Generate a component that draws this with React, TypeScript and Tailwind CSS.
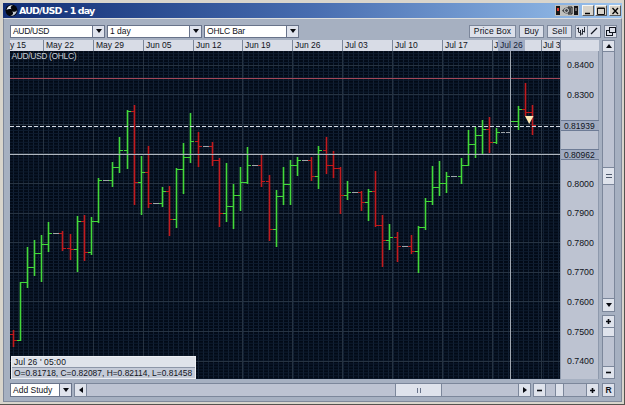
import React from "react";

type Bar = [x: number, high: number, low: number, close: number, dir: "g" | "r"];

const bars: Bar[] = [
  [13, 330, 346, 340, "r"], [20, 282, 340, 282, "g"], [27, 247, 287, 267, "g"], [34, 240, 275, 253, "g"],
  [41, 235, 281, 244, "g"], [48, 222, 251, 233, "g"], [62, 231, 250, 248, "r"], [70, 234, 259, 249, "r"],
  [77, 216, 271, 221, "g"], [84, 215, 260, 252, "r"], [91, 217, 254, 221, "g"], [98, 178, 222, 180, "g"],
  [112, 162, 186, 167, "g"], [119, 137, 172, 150, "g"], [127, 110, 168, 111, "g"], [134, 105, 204, 182, "r"],
  [141, 156, 214, 172, "g"], [148, 146, 207, 203, "r"], [162, 187, 206, 191, "g"], [169, 186, 235, 219, "r"],
  [176, 168, 227, 169, "g"], [183, 143, 193, 157, "g"], [190, 113, 162, 141, "g"], [198, 132, 166, 146, "r"],
  [212, 142, 165, 160, "r"], [219, 158, 226, 213, "r"], [226, 163, 221, 206, "g"], [233, 184, 228, 195, "g"],
  [240, 167, 210, 182, "g"], [247, 147, 183, 165, "g"], [261, 155, 186, 181, "r"], [269, 175, 240, 229, "r"],
  [276, 190, 246, 196, "g"], [283, 167, 204, 184, "g"], [290, 160, 204, 165, "g"], [297, 157, 175, 160, "g"],
  [311, 157, 180, 176, "r"], [318, 146, 188, 150, "g"], [326, 137, 173, 165, "r"], [333, 151, 177, 168, "r"],
  [340, 167, 213, 195, "r"], [347, 181, 199, 192, "g"], [361, 191, 210, 202, "r"], [368, 189, 220, 191, "g"],
  [375, 171, 226, 225, "r"], [382, 215, 266, 240, "r"], [389, 224, 249, 237, "g"], [397, 232, 261, 246, "r"],
  [411, 235, 253, 251, "r"], [418, 226, 272, 227, "g"], [425, 198, 229, 201, "g"], [432, 166, 204, 187, "g"],
  [439, 161, 195, 183, "g"], [446, 172, 192, 176, "g"], [461, 158, 183, 165, "g"], [468, 130, 165, 144, "g"],
  [475, 127, 157, 135, "g"], [482, 120, 154, 129, "g"], [489, 117, 152, 142, "r"], [496, 128, 143, 132, "g"],
  [518, 106, 129, 109, "g"], [525, 83, 115, 112, "r"], [532, 105, 134, 125, "r"],
];

const color = { g: "#43d83a", r: "#c21a1d" };
const weekColumns = [43, 93, 143, 193, 242, 292, 342, 392, 442, 492, 541];
const priceRows = [65, 94, 124, 153, 183, 213, 242, 272, 301, 331, 361];

function Chart() {
  return (
    <svg width="550" height="328" viewBox="10 51 550 328" className="block" shapeRendering="crispEdges">
      <defs>
        <pattern id="fine" x="43" y="65" width="5" height="2.955" patternUnits="userSpaceOnUse" shapeRendering="auto">
          <path d="M.5 0V3" stroke="#142235" strokeWidth="1" />
          <path d="M0 .5H5" stroke="#0d1b2e" strokeWidth="1" />
        </pattern>
      </defs>
      <rect x="10" y="51" width="550" height="328" fill="#020a17" />
      <rect x="10" y="51" width="550" height="328" fill="url(#fine)" />
      {weekColumns.map((x) => <path key={x} d={`M${x + 0.5} 51V379`} stroke="#263342" />)}
      {priceRows.map((y) => <path key={y} d={`M10 ${y + 0.5}H560`} stroke="#263342" />)}
      <path d="M10 78.5H560" stroke="#a34858" />
      <path d="M10 334.5H13" stroke={color.r} />
      {bars.map(([x, h, l, c, d], i) => {
        const next = bars[i + 1];
        const gap = next ? next[0] - x : 0;
        return (
          <g key={x}>
            <path d={`M${x + 0.5} ${h}V${l + 1}`} stroke={color[d]} strokeWidth="1.6" shapeRendering="auto" />
            <path d={`M${x} ${c + 0.5}h4`} stroke={color[d]} />
            {next && gap < 20 && <path d={`M${next[0] - 3} ${c + 0.5}h3`} stroke={color[next[4]]} />}
            {gap > 10 && gap < 20 && <path d={`M${x + 5} ${c + 0.5}h6`} stroke="#9fa5aa" />}
          </g>
        );
      })}
      <path d="M501 132.5h4M506 132.5h5" stroke="#9fa5aa" />
      <path d="M511 121.5h7" stroke={color.g} />
      <path d="M10 126.5H560" stroke="#d5dae2" strokeDasharray="4 2" />
      <path d="M10 154.5H560" stroke="#afb6bf" />
      <path d="M510.5 51V379" stroke="#a1a8b1" />
      <path d="M525 116H533.5L529.2 124Z" fill="#ffe9b5" shapeRendering="auto" />
      <text x="11.5" y="59" fontSize="8.5" textLength="65" fill="#cbd0d8">AUD/USD (OHLC)</text>
    </svg>
  );
}

function Arrow({ dir }: { dir: "up" | "down" | "left" | "right" }) {
  const d = { up: "M1 6 4 2 7 6Z", down: "M1 2H7L4 6Z", left: "M6 1V7L2 4Z", right: "M2 1V7L6 4Z" }[dir];
  return <svg width="8" height="8" viewBox="0 0 8 8"><path d={d} fill="#080a10" /></svg>;
}

function Sign({ plus }: { plus?: boolean }) {
  return (
    <svg width="7" height="7" viewBox="0 0 7 7">
      <path d={plus ? "M1 2.7H6V4.3H1ZM2.7 1H4.3V6H2.7Z" : "M1 2.7H6V4.3H1Z"} fill="#080a10" />
    </svg>
  );
}

function Select({ label, className }: { label: string; className: string }) {
  return (
    <div className={`flex h-[13px] border border-[#68738a] bg-white ${className}`}>
      <span className="flex-1 pl-[2px] leading-[11px]">{label}</span>
      <span className="flex w-[12px] items-center justify-center border-l border-[#68738a] bg-[#dfe3ed]"><Arrow dir="down" /></span>
    </div>
  );
}

const btn = "flex shrink-0 items-center justify-center border border-[#7c879b] bg-[#dce0ea]";

const windowButtons = [
  { kind: "min", gap: "ml-[3px]" },
  { kind: "max", gap: "ml-px" },
  { kind: "close", gap: "ml-[2px]" },
];

function TitleBar() {
  return (
    <header className="flex h-[15px] shrink-0 items-center bg-linear-to-r from-[#122e75] via-[#486db0] via-50% to-[#9cc4ee] pl-[2px] pr-px">
      <svg width="13" height="13" viewBox="0 0 13 13">
        <circle cx="6.5" cy="6.5" r="6" fill="#05070c" />
        <path d="M1.5 6C2 2.5 5 .8 8 1.2 5.5 2 5 4 6.6 5.3 4.7 4.7 3 4.6 1.5 6Z" fill="#e4e8ee" />
        <path d="M11.8 6.3C11.7 10 8.5 12.3 5 11.8 8.2 11.3 9 9.2 7 7.3 9 8.2 10.6 7.9 11.8 6.3Z" fill="#c3cad4" />
      </svg>
      <span className="ml-px font-['DejaVu_Sans'] text-[9.5px] font-bold leading-[14px] tracking-[-0.85px] text-white">AUD/USD - 1 day</span>
      <div className="ml-auto flex h-[11px]">
        <svg width="24" height="11" viewBox="0 0 24 11">
          <path d="M0 0H24V11H0Z" fill="#bfc0be" />
          <path d="M1 1H5V10H1ZM19 1H23V10H19Z" fill="#171719" />
          <path d="M2 3H4V6H2Z" fill="#e23830" />
          <path d="M20 3H22V6H20Z" fill="#68686a" />
          <path d="M7 5.5Q11 .5 16 3V8Q10 10 7 5.5Z" fill="#44474a" />
          <circle cx="11.5" cy="5.5" r="2" fill="none" stroke="#d5d6d6" />
          <path d="M13 2H17V9H13" fill="none" stroke="#151515" />
        </svg>
        {windowButtons.map(({ kind, gap }) => (
          <span key={kind} className={`${gap} flex w-[12px] items-center justify-center border border-[#f8f7f2] border-b-[#5c5c5c] border-r-[#5c5c5c] bg-[#d7d3ca]`}>
            <svg width="9" height="8" viewBox="0 0 9 8">
              {kind === "min" && <path d="M1 6.5H6" stroke="#000" strokeWidth="1.5" />}
              {kind === "max" && <path d="M.5 1H7.5V7.5H.5ZM.5 1.5H7.5" fill="none" stroke="#111" />}
              {kind === "close" && <path d="M1.5 1 7 7M7 1 1.5 7" stroke="#000" strokeWidth="1.3" />}
            </svg>
          </span>
        ))}
      </div>
    </header>
  );
}

function Toolbar() {
  return (
    <div className="flex h-[16px] items-center">
      <Select label="AUD/USD" className="w-[95px] tracking-[-0.3px]" />
      <Select label="1 day" className="ml-[2px] w-[95px]" />
      <Select label="OHLC Bar" className="ml-[2px] w-[95px] tracking-[-0.15px]" />
      <div className="ml-auto flex h-[13px]">
        <span className={`${btn} w-[47px] tracking-[0.1px]`}>Price Box</span>
        <span className={`${btn} ml-[3px] w-[25px]`}>Buy</span>
        <span className={`${btn} ml-[3px] w-[25px] tracking-[0.2px]`}>Sell</span>
        <span className={`${btn} ml-[3px] w-[13px]`}>
          <svg width="9" height="9" viewBox="0 0 9 9" fill="none" stroke="#111620" strokeWidth=".9"><path d="M1.5 .5V5.5M3.5 3V8.5M5.5 2V7.5M7.5 0V5.5M0 1.5H1.5M2 5.5H3.5M4 7H5.5M6 4.5H7.5" /></svg>
        </span>
        <span className={`${btn} w-[13px] border-l-0`}>
          <svg width="8" height="8" viewBox="0 0 8 8"><path d="M1 7 7 1" stroke="#111620" strokeWidth="1.3" /></svg>
        </span>
        <span className={`${btn} ml-[3px] w-[13px]`}>
          <svg className="shrink-0" width="10" height="10" viewBox="0 0 10 10" fill="none" stroke="#111620" shapeRendering="crispEdges"><path d="M3.5 1.5H9.5V6.5H3.5ZM3 4.5H.5V9.5H6.5V7" /></svg>
        </span>
      </div>
    </div>
  );
}

const dateCell = "shrink-0 whitespace-nowrap border-l border-[#7b8598] pl-[2px]";

function DateAxis() {
  return (
    <div className="flex h-[11px] bg-[#d8dce6] leading-[11px]">
      <span className="w-[33px] shrink-0">y 15</span>
      {["May 22", "May 29", "Jun 05"].map((d) => <span key={d} className={`${dateCell} w-[50px]`}>{d}</span>)}
      <span className={`${dateCell} w-[49px]`}>Jun 12</span>
      {["Jun 19", "Jun 26", "Jul 03", "Jul 10", "Jul 17"].map((d) => <span key={d} className={`${dateCell} w-[50px]`}>{d}</span>)}
      <span className={`${dateCell} w-[6px] pl-px!`}>J</span>
      <span className="w-[27px] shrink-0 bg-[#a2adc3] pl-[2px] text-[#172139]">Jul 26</span>
      <span className="w-[16px] shrink-0" />
      <span className={`${dateCell} w-[19px] pl-px! tracking-[-0.1px]`}>Jul 3</span>
      <span className="flex-1 border-l border-[#7b8598]" />
    </div>
  );
}

function PriceAxis() {
  const labels = ["0.8400", "0.8300", "", "", "0.8000", "0.7900", "0.7800", "0.7700", "0.7600", "0.7500", "0.7400"];
  return (
    <div className="relative w-[39px] shrink-0 border-l border-r border-[#8e99ac] bg-[#bdc3d1]">
      {labels.map((p, i) => <div key={i} className="flex h-[29.6px] items-center pl-[6px] text-[8.8px]">{p}</div>)}
      <div className="absolute left-0 top-[69px] h-[11px] w-[38px] border-y border-[#6d7b95] bg-[#a0abc1] pl-[3px] text-[8.5px] leading-[10px]">0.81939</div>
      <div className="absolute left-0 top-[98px] h-[11px] w-[38px] border-y border-[#6d7b95] bg-[#a0abc1] pl-[3px] text-[8.5px] leading-[10px]">0.80962</div>
    </div>
  );
}

function VerticalScroll() {
  return (
    <div className="ml-[3px] flex w-[13px] shrink-0 flex-col">
      <div className="flex h-[272px] flex-col border border-[#7c879b] bg-[#bdc3d2]">
        <span className="flex h-[11px] items-center justify-center border-b border-[#7c879b] bg-[#dfe3ec]"><Arrow dir="up" /></span>
        <span className="mt-[115px] flex h-[18px] items-center justify-center border-y border-[#7c879b] bg-[#dfe3ec]">
          <i className="h-[4px] w-[6px] border-y border-[#4e596c]" />
        </span>
        <span className="mt-auto flex h-[13px] items-center justify-center border-t border-[#7c879b] bg-[#dfe3ec]"><Arrow dir="down" /></span>
      </div>
      <div className="mt-[3px] flex h-[64px] flex-col border border-[#7c879b] bg-[#bdc3d2]">
        <span className="flex h-[12px] items-center justify-center border-b border-[#7c879b] bg-[#dfe3ec]"><Sign plus /></span>
        <span className="h-[9px] border-b border-[#7c879b] bg-[#dfe3ec]" />
        <span className="mt-auto flex h-[12px] items-center justify-center border-t border-[#7c879b] bg-[#dfe3ec]"><Sign /></span>
      </div>
    </div>
  );
}

function BottomBar() {
  return (
    <footer className="mt-[4px] flex h-[14px]">
      <div className="flex w-[62px] border border-[#68738a] bg-white">
        <span className="flex-1 pl-[2px] leading-[12px]">Add Study</span>
        <span className="flex w-[12px] items-center justify-center border-l border-[#68738a] bg-[#dfe3ed]"><Arrow dir="down" /></span>
      </div>
      <div className="ml-[2px] flex w-[457px] border border-[#7c879b] bg-[#bdc3d2]">
        <span className="flex w-[12px] items-center justify-center border-r border-[#7c879b] bg-[#dfe3ec]"><Arrow dir="left" /></span>
        <span className="ml-[308px] flex w-[47px] items-center justify-center border-x border-[#7c879b] bg-[#dfe3ec]">
          <i className="h-[5px] w-[4px] border-x border-[#68738a]" />
        </span>
        <span className="ml-auto flex w-[12px] items-center justify-center border-l border-[#7c879b] bg-[#dfe3ec]"><Arrow dir="right" /></span>
      </div>
      <div className="ml-[2px] flex w-[66px] border border-[#7c879b] bg-[#bdc3d2]">
        <span className="flex w-[12px] items-center justify-center border-r border-[#7c879b] bg-[#dfe3ec]"><Sign /></span>
        <span className="ml-[9px] w-[9px] border-x border-[#7c879b] bg-[#dfe3ec]" />
        <span className="ml-auto flex w-[12px] items-center justify-center border-l border-[#7c879b] bg-[#dfe3ec]"><Sign plus /></span>
      </div>
      <span className={`${btn} ml-[3px] w-[13px] font-bold`}>R</span>
    </footer>
  );
}

export default function App() {
  return (
    <main className="flex h-[405px] w-[625px] overflow-hidden border-b border-r border-[#55544f] bg-[#d9d5cc] p-[3px] pb-[2px] pr-[2px] font-['Liberation_Sans',sans-serif] text-[8.5px] leading-[11px] text-[#10131a]">
      <div className="flex w-[619px] flex-col">
        <TitleBar />
        <div className="flex flex-1 flex-col border border-[#7f889a] border-t-[#dedfdf] bg-[#a6b0c1] pl-[6px] pr-[4px] pt-[4px]">
          <Toolbar />
          <div className="mt-px flex h-[339px] w-[605px]">
            <div className="flex w-[589px] shrink-0 flex-col">
              <DateAxis />
              <div className="flex h-[328px]">
                <div className="relative w-[550px] shrink-0">
                  <Chart />
                  <div className="absolute bottom-0 left-[1px] w-[185px] border border-[#eef0f4] bg-[#c4cad7] text-[8.5px]">
                    <div className="h-[11px] border-b border-[#8c96a8] bg-[#dfe3ea] pl-[2px] leading-[11px] tracking-[0.12px]">Jul 26 ' 05:00</div>
                    <div className="h-[10px] whitespace-nowrap pl-[2px] text-[8.4px] leading-[10px] tracking-[0.02px]">O=0.81718, C=0.82087, H=0.82114, L=0.81458</div>
                  </div>
                </div>
                <PriceAxis />
              </div>
            </div>
            <VerticalScroll />
          </div>
          <BottomBar />
        </div>
      </div>
    </main>
  );
}
